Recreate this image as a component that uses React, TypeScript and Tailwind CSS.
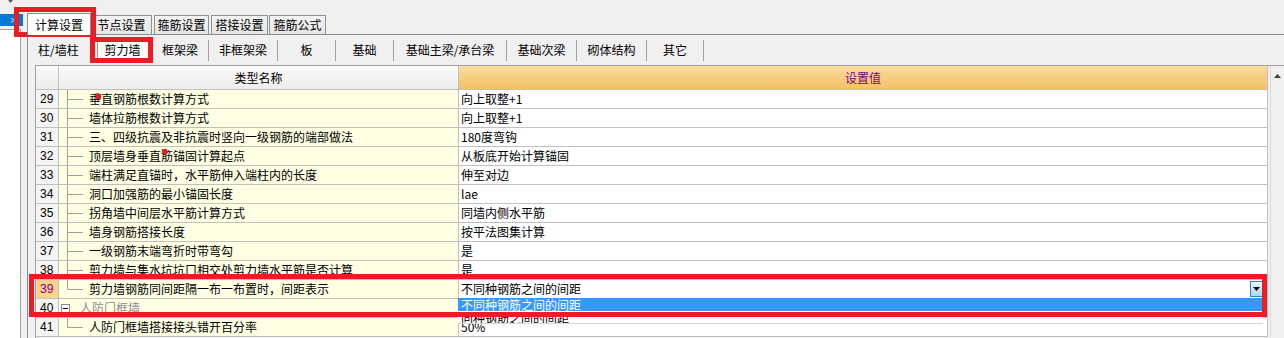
import React from 'react';

interface SettingRow {
  n: number;
  name: string;
  value: string;
  group?: boolean;
  last?: boolean;
  current?: boolean;
}

const rows: SettingRow[] = [
  { n: 29, name: '垂直钢筋根数计算方式', value: '向上取整+1' },
  { n: 30, name: '墙体拉筋根数计算方式', value: '向上取整+1' },
  { n: 31, name: '三、四级抗震及非抗震时竖向一级钢筋的端部做法', value: '180度弯钩' },
  { n: 32, name: '顶层墙身垂直筋锚固计算起点', value: '从板底开始计算锚固' },
  { n: 33, name: '端柱满足直锚时，水平筋伸入端柱内的长度', value: '伸至对边' },
  { n: 34, name: '洞口加强筋的最小锚固长度', value: 'lae' },
  { n: 35, name: '拐角墙中间层水平筋计算方式', value: '同墙内侧水平筋' },
  { n: 36, name: '墙身钢筋搭接长度', value: '按平法图集计算' },
  { n: 37, name: '一级钢筋末端弯折时带弯勾', value: '是' },
  { n: 38, name: '剪力墙与集水坑坑口相交处剪力墙水平筋是否计算', value: '是' },
  { n: 39, name: '剪力墙钢筋同间距隔一布一布置时，间距表示', value: '不同种钢筋之间的间距', last: true, current: true },
  { n: 40, name: '人防门框墙', value: '', group: true },
  { n: 41, name: '人防门框墙搭接接头错开百分率', value: '50%', last: true },
];

const topTabs = [
  { label: '计算设置', w: 'w-[64px]', gap: '', active: true },
  { label: '节点设置', w: 'w-[61px]', gap: '', active: false },
  { label: '箍筋设置', w: 'w-[55px]', gap: 'ml-[2px]', active: false },
  { label: '搭接设置', w: 'w-[57px]', gap: 'ml-[2px]', active: false },
  { label: '箍筋公式', w: 'w-[57px]', gap: 'ml-[1px]', active: false },
];

const subTabs = [
  { label: '柱/墙柱', w: 'w-[58px]' },
  { label: '剪力墙', w: 'w-[58px]', pressed: true },
  { label: '框架梁', w: 'w-[57px]' },
  { label: '非框架梁', w: 'w-[69px]' },
  { label: '板', w: 'w-[58px]' },
  { label: '基础', w: 'w-[58px]' },
  { label: '基础主梁/承台梁', w: 'w-[113px]' },
  { label: '基础次梁', w: 'w-[70px]' },
  { label: '砌体结构', w: 'w-[70px]' },
  { label: '其它', w: 'w-[57px]' },
];

function TreeLine({ last }: { last?: boolean }) {
  return (
    <svg width="21" height="18" className="shrink-0">
      <line x1="0.5" y1="0" x2="0.5" y2={last ? 9.5 : 18} stroke="#a0a0a0" />
      <line x1="0.5" y1="9.5" x2="16" y2="9.5" stroke="#a0a0a0" />
    </svg>
  );
}

function Row({ r }: { r: SettingRow }) {
  const numCls = r.current ? 'bg-[#fed28c] text-[#800080]' : 'bg-[#f4f4f4] text-black';
  return (
    <div className="flex h-[19px] shrink-0 border-b border-[#c0c0c0]">
      <div className={`w-[23px] shrink-0 border-r border-[#c0c0c0] pl-[4px] font-['Liberation_Sans',sans-serif] text-[12px] leading-[18px] ${numCls}`}>
        {r.n}
      </div>
      <div className="flex w-[400px] shrink-0 items-center overflow-hidden whitespace-nowrap border-r border-[#c0c0c0] bg-[#ffffe4] text-[12px] leading-[18px]">
        {r.group ? (
          <>
            <div className="ml-[2px] flex h-[9px] w-[9px] items-center justify-center border border-[#8a8a8a] bg-white">
              <div className="h-px w-[5px] bg-black" />
            </div>
            <span className="ml-[10px] text-[#8c8c8c]">{r.name}</span>
          </>
        ) : (
          <>
            <div className="w-[8px] shrink-0" />
            <TreeLine last={r.last} />
            <span className="ml-px">{r.name}</span>
          </>
        )}
      </div>
      <div className="relative w-[809px] shrink-0 whitespace-nowrap border-r border-[#c0c0c0] bg-white pl-[2px] text-[12px] leading-[18px]">
        {r.value}
        {r.current && (
          <div className="absolute right-[4px] top-[1px] flex h-[16px] w-[13px] items-center justify-center border border-[#3c7fb1] bg-linear-to-b from-[#eaf6fd] to-[#a7d9f5]">
            <svg width="7" height="4">
              <polygon points="0,0 7,0 3.5,4" fill="#000" />
            </svg>
          </div>
        )}
      </div>
    </div>
  );
}

export default function App() {
  return (
    <div className="relative flex h-[338px] w-[1284px] overflow-hidden bg-[#f0f0f0] font-['Noto_Sans_CJK_SC','Liberation_Sans',sans-serif] text-black">
      {/* left tree panel */}
      <div className="flex w-[21px] shrink-0 flex-col">
        <div className="flex h-[14px] justify-center">
          <svg width="5" height="4"><polygon points="0,0 5,0 2.5,3" fill="#606060" /></svg>
        </div>
        <div className="flex h-[12px] w-[23px] items-center justify-end bg-[#0078d7] pr-[7px] text-[10px] leading-none text-white">&gt;</div>
        <div className="h-[3px]" />
        <div className="flex-1 border-r border-t border-[#a0a0a0] bg-white" />
      </div>
      <div className="w-[6px] shrink-0" />

      {/* main area */}
      <div className="flex min-w-0 flex-1 flex-col">
        <div className="flex h-[35px] shrink-0 items-end border-b border-[#898c95]">
          {topTabs.map((t) =>
            t.active ? (
              <div key={t.label} className={`relative z-10 -mb-px flex h-[22px] ${t.w} items-center justify-center border border-b-0 border-[#898c95] bg-white text-[12px]`}>
                {t.label}
              </div>
            ) : (
              <div key={t.label} className={`flex h-[19px] ${t.w} ${t.gap} items-center justify-center border border-b-0 border-[#8e8f8f] bg-linear-to-b from-[#f3f3f3] to-[#e5e5e5] text-[12px]`}>
                {t.label}
              </div>
            )
          )}
        </div>

        <div className="flex min-h-0 flex-1 flex-col border-l border-[#898c95]">
          {/* sub tabs */}
          <div className="flex h-[30px] shrink-0 items-center pl-[8px]">
            {subTabs.map((s, i) => (
              <div key={s.label} className={`flex h-[21px] ${s.w} items-center border-r border-[#a0a0a0]`}>
                {s.pressed ? (
                  <div className="mx-[3px] flex h-[21px] flex-1 items-center justify-center border border-b-white border-l-[#9a9a9a] border-r-white border-t-[#9a9a9a] bg-[#f9f9f9] text-[12px]">
                    {s.label}
                  </div>
                ) : (
                  <div className={`flex flex-1 items-center text-[12px] ${i === 0 ? 'pl-[2px]' : 'justify-center'}`}>{s.label}</div>
                )}
              </div>
            ))}
          </div>

          {/* grid */}
          <div className="ml-[7px] flex min-h-0 flex-1 border-l border-t border-[#a0a0a0]">
            <div className="flex flex-col">
              <div className="flex h-[24px] shrink-0 border-b border-[#c0c0c0]">
                <div className="w-[23px] shrink-0 border-r border-[#c0c0c0] bg-linear-to-b from-[#fafafa] to-[#ebebeb]" />
                <div className="flex w-[400px] shrink-0 items-center justify-center border-r border-[#c0c0c0] bg-linear-to-b from-[#fbfbfb] to-[#ededed] text-[12px]">
                  类型名称
                </div>
                <div className="flex w-[809px] shrink-0 items-center justify-center border-r border-[#c0c0c0] bg-linear-to-b from-[#fbdb9e] to-[#f2c162] text-[12px] text-[#800080]">
                  设置值
                </div>
              </div>
              {rows.map((r) => (
                <Row key={r.n} r={r} />
              ))}
            </div>
            <div className="w-[2px] shrink-0" />
            <div className="flex w-[14px] shrink-0 justify-center border-l border-[#dcdcdc] bg-[#efefef] pt-[8px]">
              <svg width="7" height="4"><polygon points="3.5,0 7,4 0,4" fill="#404040" /></svg>
            </div>
          </div>
        </div>
      </div>

      {/* open combo list */}
      <div className="absolute left-[458px] top-[298px] h-[26px] w-[805px] overflow-hidden border-b border-[#d8d8d8] bg-white text-[12px] leading-[13px]">
        <div className="h-[13px] bg-[#3399ff] pl-[3px] text-white">不同种钢筋之间的间距</div>
        <div className="h-[13px] pl-[3px]">同种钢筋之间的间距</div>
      </div>

      {/* red markers */}
      <div className="absolute left-[96px] top-[94px] h-[5px] w-[5px] bg-[#ed1c24]" />
      <div className="absolute left-[162px] top-[149px] h-[5px] w-[5px] bg-[#ed1c24]" />

      {/* red annotation frames */}
      <div className="absolute left-[14px] top-[7px] h-[30px] w-[82px] border-[5px] border-[#ed1c24]" />
      <div className="absolute left-[90px] top-[37px] h-[26px] w-[63px] border-[5px] border-[#ed1c24]" />
      <div className="absolute left-[29px] top-[274px] h-[43px] w-[1238px] border-[5px] border-[#ed1c24]" />
    </div>
  );
}
